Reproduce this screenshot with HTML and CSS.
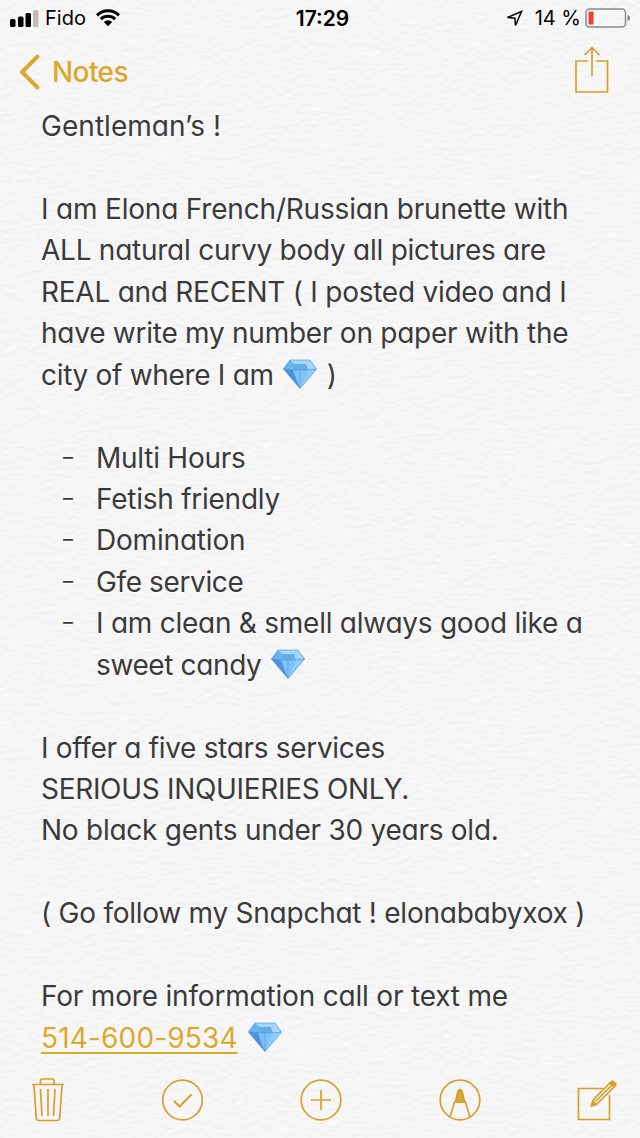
FILE: index.html
```html
<!DOCTYPE html>
<html lang="en">
<head>
    <meta charset="UTF-8">
    <title>Notes</title>
    <link rel="stylesheet" href="styles.css">
</head>
<body>
    <!--paper grain-->
    <svg class="paper" width="640" height="1138">
        <filter id="grain" x="0" y="0" width="100%" height="100%" color-interpolation-filters="sRGB">
            <feTurbulence type="fractalNoise" baseFrequency="0.11 0.22" numOctaves="2" seed="4" result="n"/>
            <feDiffuseLighting in="n" surfaceScale="0.09" diffuseConstant="1.135" lighting-color="#fafafa">
                <feDistantLight azimuth="260" elevation="60"/>
            </feDiffuseLighting>
        </filter>
        <rect width="640" height="1138" filter="url(#grain)"/>
    </svg>
    <!--shared shapes-->
    <svg class="defs" width="0" height="0">
        <symbol id="gem" viewBox="0 0 34 30">
            <path d="M7 1H27L33.500 10L17 29.500L.5 10Z" fill="#62b4f5"/>
            <path d="M7 1H27L23 5H11Z" fill="#a5d9fb"/>
            <path d="M7 1L11 5L10 11L.5 10Z" fill="#69b5ed"/>
            <path d="M11 5H23L25 11H10Z" fill="#64aee8"/>
            <path d="M27 1L33.500 10L25 11L23 5Z" fill="#a6d8fa"/>
            <path d="M.5 10L10 11L17 29.500Z" fill="#4e93e0"/>
            <path d="M10 11H25L17 29.500Z" fill="#7cc4fc"/>
            <path d="M25 11L33.500 10L17 29.500Z" fill="#8fcdfc"/>
            <path d="M7 1H27L33.500 10L17 29.500L.5 10ZM.5 10L10 11H25L33.500 10M17 11V29" fill="none" stroke="#4b91d8" stroke-width=".6"/>
        </symbol>
    </svg>

    <div class="screen">
        <header class="status">
            <div class="carrier">
                <svg width="30" height="18" viewBox="0 0 30 18">
                    <rect x="0" y="10" width="5.500" height="8" rx="1.500"/>
                    <rect x="8" y="7.500" width="5.500" height="10.500" rx="1.500"/>
                    <rect x="15.500" y="4" width="5.500" height="14" rx="1.500"/>
                    <rect x="23" y="1" width="5.500" height="17" rx="1.500" fill="#bdbdbd"/>
                </svg>
                <span class="fido">Fido</span>
                <svg class="wifi" width="24" height="18" viewBox="0 0 24 18">
                    <path d="M1 6.300A15.800 15.800 0 0 1 23 6.300M4.800 10.200A10.400 10.400 0 0 1 19.200 10.200" fill="none" stroke="#000" stroke-width="3"/>
                    <path d="M7.800 13A6 6 0 0 1 16.200 13L12 17.300Z"/>
                </svg>
            </div>
            <div class="time">17:29</div>
            <div class="power">
                <svg width="17" height="17" viewBox="0 0 17 17">
                    <path d="M1.500 7.500L15.500 1.500L9.500 15.500L8.900 8.200Z" fill="none" stroke="#000" stroke-width="1.500"/>
                </svg>
                <span class="percent">14 %</span>
                <svg width="46" height="20" viewBox="0 0 46 20">
                    <rect x="1" y="1" width="39.500" height="18" rx="3.500" fill="none" stroke="#8b8b8b" stroke-width="1.500"/>
                    <rect x="3.500" y="3.500" width="5" height="13" rx="1" fill="#ee4135"/>
                    <path d="M42.500 6.500Q48 10 42.500 13.500Z" fill="#8b8b8b"/>
                </svg>
            </div>
        </header>

        <nav class="nav">
            <a class="back">
                <svg width="22" height="38" viewBox="0 0 22 38">
                    <path d="M18.500 3.500L3 19L18.500 34.500" fill="none" stroke="#dba82f" stroke-width="4" stroke-linecap="round" stroke-linejoin="round"/>
                </svg>
                <span>Notes</span>
            </a>
            <svg class="line-icon" width="36" height="48" viewBox="0 0 36 48">
                <path d="M14 15H2V46H33.500V15H22M18 30V2M10.500 9L18 1.700L25.500 9"/>
            </svg>
        </nav>

        <main class="note">
            <p class="l1">Gentleman’s !</p>
            <p></p>
            <p class="l3">I am Elona French/Russian brunette with</p>
            <p class="l4">ALL natural curvy body all pictures are</p>
            <p class="l5">REAL and RECENT ( I posted video and I</p>
            <p class="l6">have write my number on paper with the</p>
            <p class="l7">city of where I am <svg class="gem"><use href="#gem"/></svg> )</p>
            <p></p>
            <ul>
                <li><p class="l9">Multi Hours</p></li>
                <li><p class="l10">Fetish friendly</p></li>
                <li><p class="l11">Domination</p></li>
                <li><p class="l12">Gfe service</p></li>
                <li>
                    <p class="l13">I am clean &amp; smell always good like a</p>
                    <p class="l14">sweet candy <svg class="gem"><use href="#gem"/></svg></p>
                </li>
            </ul>
            <p></p>
            <p class="l16">I offer a five stars services</p>
            <p class="l17">SERIOUS INQUIERIES ONLY.</p>
            <p class="l18">No black gents under 30 years old.</p>
            <p></p>
            <p class="l20">( Go follow my Snapchat ! elonababyxox )</p>
            <p></p>
            <p class="l22">For more information call or text me</p>
            <p class="l23"><a class="phone">514-600-9534</a> <svg class="gem"><use href="#gem"/></svg></p>
        </main>

        <footer class="toolbar">
            <svg class="line-icon" width="34" height="46" viewBox="0 0 34 46">
                <path d="M1 7.500H33M9.500 7V4Q9.500 2 11.500 2H21Q23 2 23 4V7M3 8L5.200 40.500Q5.300 43.500 8 43.500H26Q28.500 43.500 28.700 40.500L31 8M9.500 12L11 39M17 12V39M24 12L22.500 39"/>
            </svg>
            <svg class="line-icon" width="42" height="42" viewBox="0 0 42 42">
                <circle cx="21.500" cy="21" r="19.800"/>
                <path d="M13 22L18.500 27.500L30.500 15.500" stroke-width="2"/>
            </svg>
            <svg class="line-icon" width="42" height="42" viewBox="0 0 42 42">
                <circle cx="21" cy="21" r="19.800"/>
                <path d="M21 11V31M11 21H31"/>
            </svg>
            <svg class="line-icon pen" width="42" height="42" viewBox="0 0 42 42">
                <circle cx="21" cy="21" r="19.800"/>
                <path d="M11 38L15.500 23H26.500L31 38"/>
                <path class="solid" d="M16.500 23L18.800 12.500Q21 8.500 23.200 12.500L25.500 23Z"/>
            </svg>
            <svg class="line-icon" width="42" height="42" viewBox="0 0 42 42">
                <path d="M27 9.500H2.500V40.500H33.500V16"/>
                <path d="M15.500 27L17.500 20.500L34 4L38 8L21.500 24.500ZM19 23L35.500 6.500"/>
                <path class="solid" d="M34.500 3.500L36.500 2L40 5L38.500 7.500Z"/>
                <path class="solid" d="M15.500 27L16.800 22.500L20 25.500Z"/>
            </svg>
        </footer>
    </div>
</body>
</html>
```
FILE: styles.css
```css
*{
    margin: 0;
    padding: 0;
    box-sizing: border-box;
}
body{
    width: 640px;
    height: 1138px;
    background-color: #f5f5f5;
    font-family: Inter, "Liberation Sans", sans-serif;
    overflow: hidden;
}
/**paper grain under the page**/
.paper{
    position: absolute;
    left: 0;
    top: 0;
}
.defs{
    position: absolute;
}
.screen{
    position: relative;
    display: flex;
    flex-direction: column;
    width: 640px;
    height: 1138px;
}
/**status bar**/
.status{
    display: grid;
    grid-template-columns: 1fr auto 1fr;
    align-items: center;
    height: 36px;
    padding: 0 9px 0 10px;
    font-size: 20px;
    color: #000;
}
.carrier,.power{
    display: flex;
    align-items: center;
}
.power{
    justify-content: flex-end;
}
.fido{
    margin-left: 5px;
}
.wifi{
    margin-left: 10px;
}
.time{
    padding-left: 4px;
    font-size: 21px;
    font-weight: 600;
}
.percent{
    margin: 0 4px 0 12px;
}
/**navigation**/
.nav{
    display: flex;
    justify-content: space-between;
    height: 70px;
    padding: 10px 30px 0 19px;
}
.back{
    display: flex;
    align-items: center;
    height: 52px;
    font-size: 28px;
    font-weight: 500;
    letter-spacing: -0.6px;
    color: #dba82f;
}
.back span{
    margin-left: 11px;
}
.line-icon{
    fill: none;
    stroke: #d79f2b;
    stroke-width: 1.7;
}
.line-icon .solid{
    fill: #d9a733;
}
/**note text**/
.note{
    padding-left: 41px;
    font-size: 28px;
    line-height: 41.45px;
    color: #3a3a3a;
    font-feature-settings: "cv11";
    white-space: nowrap;
    text-shadow: 0 1px 1px #fff;
}
.note p{
    height: 41.45px;
    letter-spacing: -0.25px;
}
.note .l1{
    letter-spacing: 0.04px;
}
.note .l3,.note .l11,.note .l22{
    letter-spacing: -0.19px;
}
.note .l12,.note .l14{
    letter-spacing: -0.38px;
}
.note .l7,.note .l16,.note .l17{
    letter-spacing: -0.31px;
}
.note .l23{
    letter-spacing: 0.17px;
}
.note ul{
    list-style: none;
}
.note li{
    position: relative;
    padding-left: 55px;
}
.note li:before{
    content: '–';
    position: absolute;
    left: 22px;
    top: -1px;
    font-size: 20px;
}
.gem{
    width: 34px;
    height: 30px;
    vertical-align: -4px;
}
.l7 .gem{
    margin: 0 2px;
}
.l14 .gem,.l23 .gem{
    margin-left: 2px;
}
.phone{
    color: #dba82f;
    text-decoration: underline;
    text-decoration-thickness: 2px;
    text-underline-offset: 4px;
}
/**bottom toolbar**/
.toolbar{
    display: flex;
    justify-content: space-between;
    align-items: center;
    height: 76px;
    margin-top: auto;
    padding: 0 22px 0 31px;
}
.toolbar .pen{
    margin: 0 -1px 0 1px;
}
```
